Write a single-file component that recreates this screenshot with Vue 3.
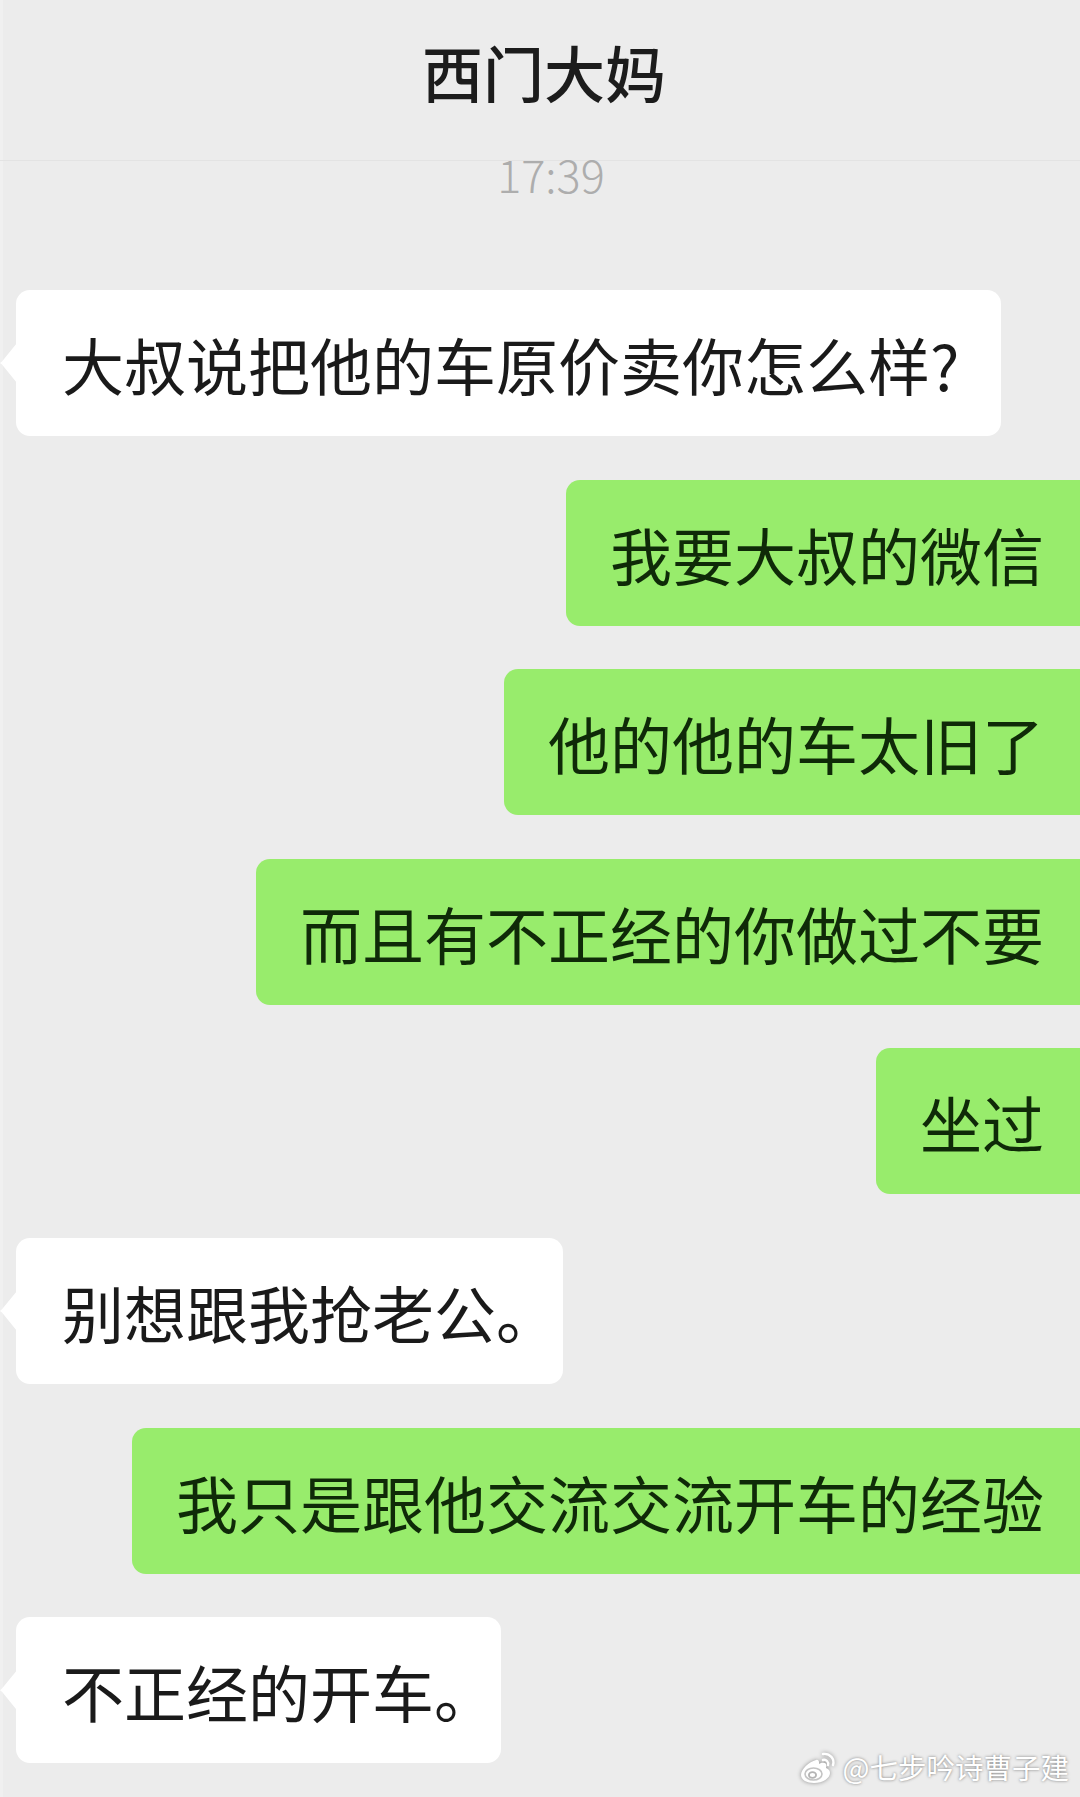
<template>
  <div class="chat">
    <header class="chat-header">
      <h1 class="chat-title">西门大妈</h1>
    </header>
    <div class="chat-time">17:39</div>
    <div class="messages">
      <div v-for="(msg, i) in messages" :key="i" class="row" :class="msg.mine ? 'mine' : 'other'">
        <div class="bubble" :class="{ 'ends-stop': msg.text.endsWith('。') }">{{ msg.text }}</div>
      </div>
    </div>
    <div class="watermark">
      <svg class="weibo" viewBox="2 0 36 34" width="36" height="34">
        <path d="M17 10C10 12 2 19 2 25c0 5 6 8 13 8 9 0 16-5 16-10 0-3-2-4-4-5 1-3 0-5-2-5-2-.5-4 .5-5 1 .5-3-1-5-3-4z" fill="#fff" />
        <ellipse cx="14.5" cy="24" rx="8.5" ry="6" fill="none" stroke="#c4c4c4" stroke-width="1.6" />
        <ellipse cx="13.5" cy="25" rx="3.6" ry="2.8" fill="none" stroke="#b4b4b4" stroke-width="1.8" />
        <path d="M24 10c3-1 6 2 5 5" fill="none" stroke="#fff" stroke-width="2.4" stroke-linecap="round" />
        <path d="M24 4c7-1 12 5 10 11" fill="none" stroke="#fff" stroke-width="2.4" stroke-linecap="round" />
      </svg>
      <span class="wm-text">@七步吟诗曹子建</span>
    </div>
  </div>
</template>

<script setup>
const messages = [
  { text: '大叔说把他的车原价卖你怎么样?', mine: false },
  { text: '我要大叔的微信', mine: true },
  { text: '他的他的车太旧了', mine: true },
  { text: '而且有不正经的你做过不要', mine: true },
  { text: '坐过', mine: true },
  { text: '别想跟我抢老公。', mine: false },
  { text: '我只是跟他交流交流开车的经验', mine: true },
  { text: '不正经的开车。', mine: false }
]
</script>

<style scoped>
.chat {
  position: relative;
  width: 1080px;
  height: 1797px;
  overflow: hidden;
  background: #ececec;
  box-shadow: inset 3px 0 0 #f0f0f0;
  font-family: "Noto Sans CJK SC", "Noto Sans", sans-serif;
}
.chat-header {
  height: 160px;
  display: flex;
  justify-content: center;
  align-items: center;
  padding-left: 8px;
  border-bottom: 1px solid #e3e3e3;
}
.chat-title {
  margin: 0 0 16px;
  font-size: 61px;
  font-weight: 500;
  line-height: 70px;
  color: #1c1c1c;
}
.chat-time {
  height: 26px;
  line-height: 26px;
  padding-left: 22px;
  text-align: center;
  font-size: 45px;
  font-weight: 300;
  color: #adadad;
}
.messages {
  display: flex;
  flex-direction: column;
  gap: 43.6px;
  padding-top: 103px;
}
.row {
  display: flex;
}
.row.mine {
  justify-content: flex-end;
}
.row.other {
  padding-left: 16px;
}
.bubble {
  position: relative;
  height: 146px;
  line-height: 146px;
  padding-top: 1px;
  font-size: 62px;
  color: #1a1a1a;
  white-space: nowrap;
  box-sizing: border-box;
}
.other .bubble {
  padding-left: 46px;
  padding-right: 42px;
  background: #fff;
  border-radius: 14px;
}
.other .bubble.ends-stop {
  padding-right: 5px;
}
.other .bubble::before {
  content: "";
  position: absolute;
  left: -16px;
  top: 53px;
  width: 17px;
  height: 40px;
  background: #fff;
  clip-path: polygon(100% 0, 2px 46%, 0 50%, 2px 54%, 100% 100%);
}
.mine .bubble {
  padding-left: 44px;
  padding-right: 36px;
  background: #98ec6c;
  border-radius: 14px 0 0 14px;
  color: #0f2a08;
}
.watermark {
  position: absolute;
  right: 11px;
  bottom: 10px;
  display: flex;
  align-items: center;
  gap: 6px;
}
.wm-text {
  font-size: 28.5px;
  line-height: 40px;
  color: #fff;
  text-shadow: 0 0 3px rgba(0, 0, 0, 0.5);
}
.weibo {
  filter: drop-shadow(0 0 2px rgba(0, 0, 0, 0.4));
}
</style>
